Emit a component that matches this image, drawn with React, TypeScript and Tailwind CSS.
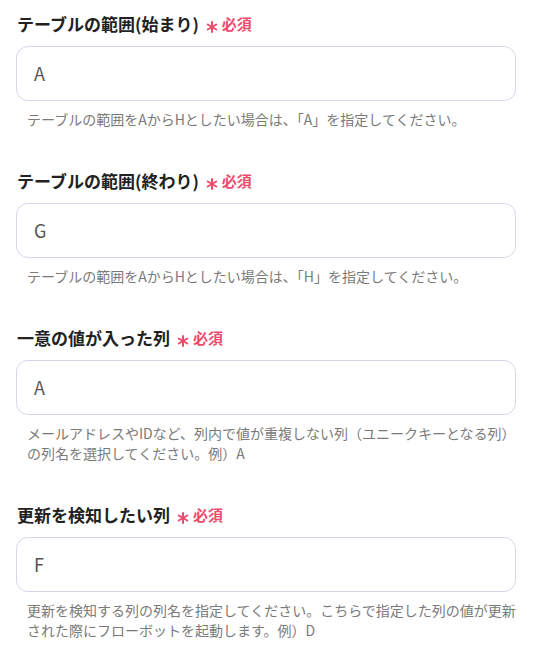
const fields = [
  {
    label: "テーブルの範囲(始まり)",
    value: "A",
    help: "テーブルの範囲をAからHとしたい場合は、「A」を指定してください。",
  },
  {
    label: "テーブルの範囲(終わり)",
    value: "G",
    help: "テーブルの範囲をAからHとしたい場合は、「H」を指定してください。",
  },
  {
    label: "一意の値が入った列",
    value: "A",
    help: "メールアドレスやIDなど、列内で値が重複しない列（ユニークキーとなる列）の列名を選択してください。例）A",
  },
  {
    label: "更新を検知したい列",
    value: "F",
    help: "更新を検知する列の列名を指定してください。こちらで指定した列の値が更新された際にフローボットを起動します。例）D",
  },
];

const Asterisk = () => (
  <svg width="12" height="12" viewBox="0 0 12 12" className="mt-[6px]">
    <g stroke="#ef4a6c" strokeWidth="2" strokeLinecap="round">
      <line x1="6" y1="1" x2="6" y2="11" />
      <line x1="1.7" y1="3.5" x2="10.3" y2="8.5" />
      <line x1="1.7" y1="8.5" x2="10.3" y2="3.5" />
    </g>
  </svg>
);

const Field = ({ label, value, help }: { label: string; value: string; help: string }) => (
  <div className="flex flex-col">
    <div className="flex items-center gap-[7px] pl-px h-6">
      <span className="text-[17px] leading-6 font-bold text-[#222222]">{label}</span>
      <span className="flex items-center gap-[4px]">
        <Asterisk />
        <span className="text-[15px] leading-6 font-bold text-[#ef4a6c]">必須</span>
      </span>
    </div>
    <div className="mt-[10px] w-[500px] h-[55px] rounded-xl border border-[#d5d7e6] bg-white flex items-center pl-[17px] text-[18px] text-[#555555]">
      {value}
    </div>
    <p className="mt-2 w-[503px] pl-[11px] text-sm leading-5 text-[#7a7a7a]">{help}</p>
  </div>
);

export default function App() {
  return (
    <div
      className="min-h-screen bg-white px-4 pt-3 flex flex-col gap-[40px]"
      style={{ fontFamily: '"Noto Sans CJK JP", "Noto Sans", sans-serif' }}
    >
      {fields.map((f, i) => (
        <Field key={i} {...f} />
      ))}
    </div>
  );
}
